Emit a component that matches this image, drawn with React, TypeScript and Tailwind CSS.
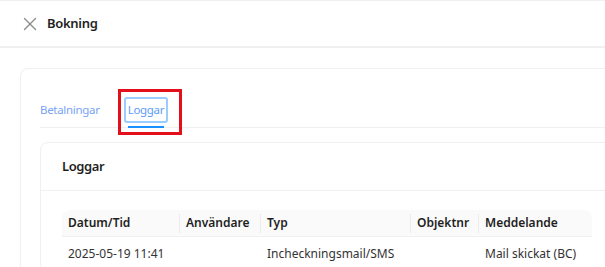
import { X } from 'lucide-react';

const columns = [
  { key: 'time', label: 'Datum/Tid', width: 'w-[118px]' },
  { key: 'user', label: 'Användare', width: 'w-[81px]' },
  { key: 'type', label: 'Typ', width: 'w-[150px]' },
  { key: 'obj', label: 'Objektnr', width: 'w-[68px]' },
  { key: 'msg', label: 'Meddelande', width: 'flex-1' },
];

const rows = [
  {
    time: '2025-05-19 11:41',
    user: '',
    type: 'Incheckningsmail/SMS',
    obj: '',
    msg: 'Mail skickat (BC)',
  },
];

// Booking drawer, "Loggar" tab selected
export default function App() {
  return (
    <div
      className="h-[267px] w-full overflow-hidden bg-white text-[#262626]"
      style={{ fontFamily: '"Noto Sans", "Open Sans", sans-serif' }}
    >
      <header className="flex h-[48px] items-center gap-[6px] border-t border-b-2 border-[#f0f0f0] pl-[19px]">
        <X className="h-[22px] w-[22px] text-[#8c8c8c]" strokeWidth={1.5} />
        <h1 className="text-[13px] font-semibold tracking-[-0.3px] text-[#1f1f1f]">Bokning</h1>
      </header>

      <div className="pl-[20px] pt-[20px]">
        <div className="w-[640px] rounded-lg border border-[#f0f0f0] pl-[19px] pt-[24px]">
          <nav className="relative flex border-b border-[#f0f0f0] text-[11.5px] tracking-[-0.3px]">
            <button className="flex h-[34px] items-center pr-[26px] text-[#7aa3f5]">Betalningar</button>
            <button className="relative flex h-[34px] items-center text-[#5d9cf5]">
              <span className="rounded-[1px] px-[2px] py-[3px] leading-[16px] outline-2 outline-[#9ccbff]">Loggar</span>
              <span className="absolute bottom-[-1px] left-[2px] right-[2px] h-[2px] bg-[#1890ff]" />
            </button>
            <span className="pointer-events-none absolute left-[78px] top-[-4px] h-[46px] w-[64px] border-[3px] border-[#e3101c]" />
          </nav>

          <section className="mt-[14px] rounded-lg border border-[#f0f0f0]">
            <div className="flex h-[48px] items-center border-b border-[#f0f0f0] pl-[21px]">
              <h2 className="text-[13px] font-semibold tracking-[-0.4px] text-[#1f1f1f]">Loggar</h2>
            </div>
            <div className="pl-[21px] pt-[19px]">
              <div className="w-[530px] text-[12px]">
                <div className="flex h-[27px] items-center rounded-t-lg border-b border-[#f0f0f0] bg-[#fafafa] font-semibold text-[#1f1f1f]">
                  {columns.map((c, i) => (
                    <div key={c.key} className={`relative flex h-full items-center px-[6px] ${c.width}`}>
                      {c.label}
                      {i < columns.length - 1 && (
                        <span className="absolute right-0 top-[4px] h-[19px] w-px bg-[#ececec]" />
                      )}
                    </div>
                  ))}
                </div>
                {rows.map((r, idx) => (
                  <div key={idx} className="flex h-[34px] items-center text-[#333]">
                    {columns.map((c) => (
                      <div key={c.key} className={`px-[6px] ${c.width}`}>
                        {r[c.key as keyof typeof r]}
                      </div>
                    ))}
                  </div>
                ))}
              </div>
            </div>
          </section>
        </div>
      </div>
    </div>
  );
}
